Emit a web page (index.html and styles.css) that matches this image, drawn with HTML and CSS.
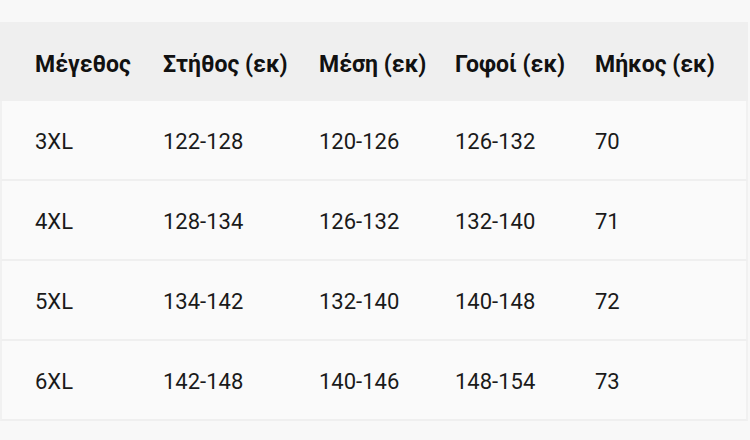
FILE: index.html
```html
<!DOCTYPE html>
<html lang="el">
<head>
<meta charset="utf-8">
<link rel="stylesheet" href="styles.css">
</head>
<body>
<table class="size-table">
  <thead>
    <tr>
      <th class="c1">Μέγεθος</th>
      <th class="c2">Στήθος (εκ)</th>
      <th class="c3">Μέση (εκ)</th>
      <th class="c4">Γοφοί (εκ)</th>
      <th class="c5">Μήκος (εκ)</th>
    </tr>
  </thead>
  <tbody>
    <tr><td class="c1">3XL</td><td class="c2">122-128</td><td class="c3">120-126</td><td class="c4">126-132</td><td class="c5">70</td></tr>
    <tr><td class="c1">4XL</td><td class="c2">128-134</td><td class="c3">126-132</td><td class="c4">132-140</td><td class="c5">71</td></tr>
    <tr><td class="c1">5XL</td><td class="c2">134-142</td><td class="c3">132-140</td><td class="c4">140-148</td><td class="c5">72</td></tr>
    <tr><td class="c1">6XL</td><td class="c2">142-148</td><td class="c3">140-146</td><td class="c4">148-154</td><td class="c5">73</td></tr>
  </tbody>
</table>
</body>
</html>
```
FILE: styles.css
```css
html, body {
  margin: 0;
  padding: 0;
  background: #f8f8f8;
}
body {
  padding-top: 22px;
  font-family: Roboto, "Noto Sans", sans-serif;
  color: #1a1a1a;
}
.size-table {
  width: 748px;
  border-collapse: separate;
  border-spacing: 0;
  table-layout: fixed;
  font-size: 22px;
}
.size-table th,
.size-table td {
  box-sizing: border-box;
  text-align: left;
  white-space: nowrap;
  padding: 3px 0 0 16px;
}
.size-table th {
  background: #efefef;
  font-weight: 700;
  font-size: 23px;
  height: 79px;
  padding-top: 5px;
  color: #111;
}
.size-table td {
  background: #fafafa;
  height: 80px;
  border-bottom: 2px solid #efefef;
}
.size-table td.c1 {
  border-left: 2px solid #f1f1f1;
}
.size-table td.c5 {
  border-right: 2px solid #f1f1f1;
}
.size-table .c1 { width: 147px; padding-left: 35px; }
.size-table td.c1 { padding-left: 33px; }
.size-table .c2 { width: 156px; }
.size-table .c3 { width: 136px; }
.size-table .c4 { width: 140px; }
.size-table .c5 { width: 169px; }
```
